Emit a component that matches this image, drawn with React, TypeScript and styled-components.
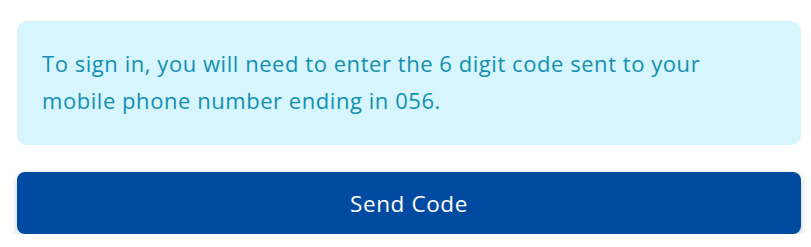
import { createGlobalStyle, styled } from 'styled-components'

const GlobalStyle = createGlobalStyle`
  html, body {
    margin: 0;
    padding: 0;
    background: #ffffff;
  }
  body {
    font-family: "Open Sans", "Liberation Sans", sans-serif;
  }
`

function App() {
  return (
    <Page>
      <GlobalStyle />
      <Notice>
        To sign in, you will need to enter the 6 digit code sent to your mobile phone number
        ending in 056.
      </Notice>
      <SendButton type="button">Send Code</SendButton>
    </Page>
  )
}

const Page = styled.div`
  display: flex;
  flex-direction: column;
  gap: 27px;
  width: 784px;
  padding: 21px 0 0 17px;
`

const Notice = styled.p`
  margin: 0;
  padding: 24px 60px 26px 25px;
  background-color: #d6f5fd;
  border-radius: 10px;
  color: #1190b2;
  font-size: 22px;
  letter-spacing: 0.55px;
  line-height: 37px;
`

const SendButton = styled.button`
  height: 62px;
  padding: 0;
  border: none;
  border-radius: 8px;
  background-color: #004ba1;
  color: #ffffff;
  font-family: "Open Sans", "Liberation Sans", sans-serif;
  font-size: 22.5px;
  letter-spacing: 0.6px;
  box-shadow: 0 3px 6px rgba(0, 60, 160, 0.25);
  cursor: default;
`

export default App
